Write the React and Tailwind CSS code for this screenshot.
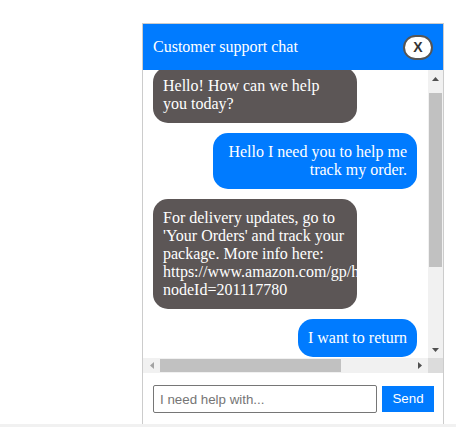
import React from "react";

const serif = { fontFamily: '"Liberation Serif", "Times New Roman", serif' };

function Tri({ dir, color }) {
  const pts = {
    up: "0,4 3.5,0 7,4",
    down: "0,0 7,0 3.5,4",
    left: "4,0 4,7 0,3.5",
    right: "0,0 0,7 4,3.5",
  }[dir];
  const vert = dir === "up" || dir === "down";
  return (
    <svg width={vert ? 7 : 4} height={vert ? 4 : 7} viewBox={vert ? "0 0 7 4" : "0 0 4 7"}>
      <polygon points={pts} fill={color} />
    </svg>
  );
}

function Bubble({ me, children }) {
  return (
    <div
      className={`max-w-[204px] overflow-hidden rounded-[15px] p-[10px] text-[16px] leading-[18px] text-white ${
        me ? "self-end bg-[#007bff] text-right" : "self-start bg-[#5c5656]"
      }`}
      style={serif}
    >
      {children}
    </div>
  );
}

export default function App() {
  return (
    <div className="relative h-[427px] w-[456px] overflow-hidden bg-white">
      <div className="ml-[142px] mt-[23px] flex w-[302px] flex-col border border-[#cccccc] bg-white">
        {/* header */}
        <div className="flex h-[46px] items-center justify-between bg-[#007bff] pl-[10px] pr-[10px]">
          <span className="text-[16px] text-white" style={serif}>
            Customer support chat
          </span>
          <button
            className="flex h-[25px] w-[30px] items-center justify-center rounded-full border-2 border-[#555555] bg-white text-[14px] font-bold text-[#333333]"
            style={{ fontFamily: '"Liberation Sans", Arial, sans-serif' }}
          >
            X
          </button>
        </div>

        {/* messages + scrollbars */}
        <div className="flex h-[303px] flex-col">
          <div className="flex h-[288px]">
            <div className="flex-1 overflow-hidden">
              <div className="-mt-[3px] flex flex-col gap-[10px] pl-[10px] pr-[11px]">
                <Bubble>Hello! How can we help you today?</Bubble>
                <Bubble me>Hello I need you to help me track my order.</Bubble>
                <Bubble>
                  For delivery updates, go to 'Your Orders' and track your package. More info here:
                  https://www.amazon.com/gp/help/customer/display.html?nodeId=201117780
                </Bubble>
                <Bubble me>I want to return</Bubble>
                <Bubble>Sure! Please go to 'Your Orders' to start a return.</Bubble>
              </div>
            </div>
            {/* vertical scrollbar */}
            <div className="flex w-[15px] flex-col bg-[#f1f1f1]">
              <div className="flex h-[17px] items-center justify-center">
                <Tri dir="up" color="#505050" />
              </div>
              <div className="flex-1 pt-[6px]">
                <div className="mx-[1px] h-[174px] bg-[#c1c1c1]" />
              </div>
              <div className="flex h-[17px] items-center justify-center">
                <Tri dir="down" color="#505050" />
              </div>
            </div>
          </div>
          {/* horizontal scrollbar */}
          <div className="flex h-[15px]">
            <div className="flex flex-1 items-center bg-[#f1f1f1]">
              <div className="flex w-[17px] items-center justify-center">
                <Tri dir="left" color="#a3a3a3" />
              </div>
              <div className="flex-1">
                <div className="h-[13px] w-[181px] bg-[#c1c1c1]" />
              </div>
              <div className="flex w-[17px] items-center justify-center">
                <Tri dir="right" color="#505050" />
              </div>
            </div>
            <div className="w-[15px] bg-[#dcdcdc]" />
          </div>
        </div>

        {/* input row */}
        <div className="flex h-[52px] items-center gap-[5px] pl-[10px] pr-[9px]">
          <input
            placeholder="I need help with..."
            className="h-[28px] min-w-0 flex-1 rounded-[2px] border border-[#767676] px-[6px] text-[13.33px] text-black placeholder:text-[#757575]"
            style={{ fontFamily: '"Liberation Sans", Arial, sans-serif' }}
          />
          <button
            className="h-[26px] w-[52px] bg-[#007bff] text-[13.33px] text-white"
            style={{ fontFamily: '"Liberation Sans", Arial, sans-serif' }}
          >
            Send
          </button>
        </div>
      </div>
      <div className="absolute bottom-0 left-0 h-[3px] w-full bg-[#f1f1f1]" />
    </div>
  );
}
